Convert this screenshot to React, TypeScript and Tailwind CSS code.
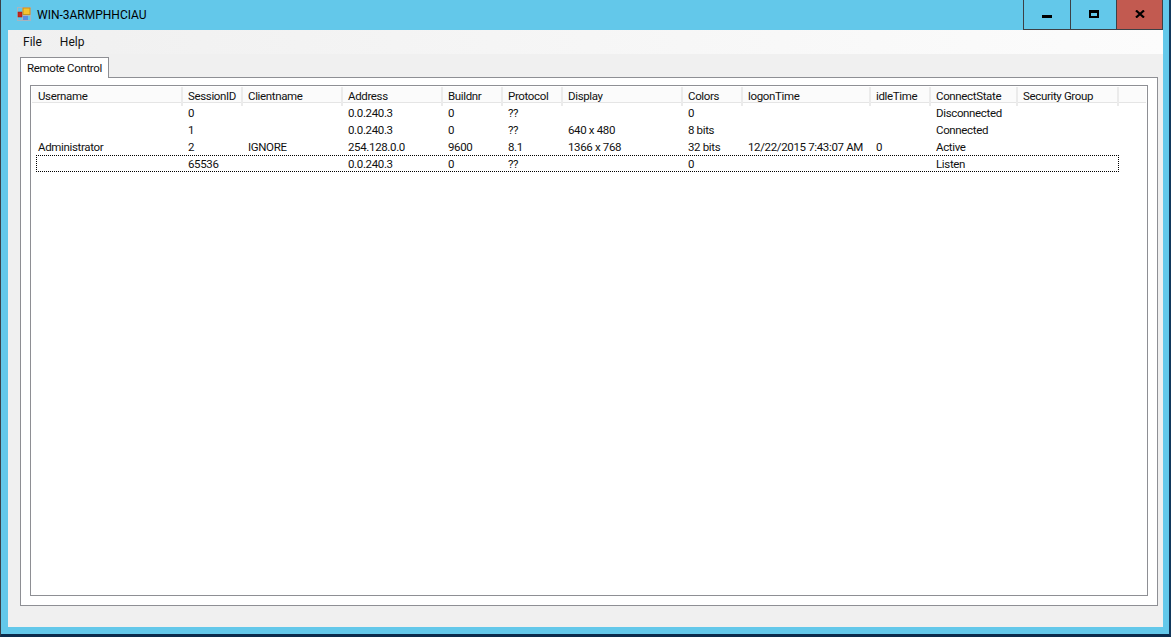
const gridCols =
  "grid grid-cols-[150px_60px_100px_100px_60px_60px_120px_60px_128px_60px_87px_101px]"

const columns = [
  "Username",
  "SessionID",
  "Clientname",
  "Address",
  "Buildnr",
  "Protocol",
  "Display",
  "Colors",
  "logonTime",
  "idleTime",
  "ConnectState",
  "Security Group",
]

const rows = [
  ["", "0", "", "0.0.240.3", "0", "??", "", "0", "", "", "Disconnected", ""],
  ["", "1", "", "0.0.240.3", "0", "??", "640 x 480", "8 bits", "", "", "Connected", ""],
  ["Administrator", "2", "IGNORE", "254.128.0.0", "9600", "8.1", "1366 x 768", "32 bits", "12/22/2015 7:43:07 AM", "0", "Active", ""],
  ["", "65536", "", "0.0.240.3", "0", "??", "", "0", "", "", "Listen", ""],
]

function AppIcon() {
  return (
    <svg width="14" height="14" viewBox="0 0 14 14" className="mb-[2px] shrink-0">
      <rect x="0.5" y="0.5" width="13" height="13" fill="none" stroke="#a9b4bd" />
      <line x1="5.5" y1="0" x2="5.5" y2="14" stroke="#a9b4bd" />
      <line x1="0" y1="8.5" x2="14" y2="8.5" stroke="#a9b4bd" />
      <rect x="1" y="5" width="4" height="5" fill="#c8281e" stroke="#8c1a14" strokeWidth="0.5" />
      <rect x="6" y="1" width="7" height="6.5" fill="#f4c430" stroke="#c08a10" strokeWidth="0.8" />
      <rect x="6" y="9" width="5" height="4" fill="#5a8fe0" />
    </svg>
  )
}

function WindowButtons() {
  return (
    <div className="flex h-[30px] w-[140px] border-x border-b border-[#3c4046]">
      <div className="relative h-full w-[47px] border-r border-[#3c4046]">
        <div className="absolute left-[18px] top-[15px] h-[3px] w-[10px] bg-black" />
      </div>
      <div className="relative h-full w-[46px] border-r border-[#3c4046]">
        <div className="absolute left-[18px] top-[10px] h-[8px] w-[10px] border-2 border-black border-t-[3px]" />
      </div>
      <div className="flex h-full flex-1 items-start justify-center bg-[#c25a50] pt-[10px]">
        <svg width="10" height="8" viewBox="0 0 10 8">
          <path d="M1 0.5 L9 7.5 M9 0.5 L1 7.5" stroke="#000" strokeWidth="2.2" fill="none" />
        </svg>
      </div>
    </div>
  )
}

export default function App() {
  return (
    <div className="flex h-[637px] w-[1171px] flex-col overflow-hidden border-b-[3px] border-l border-r-[2px] border-b-[#0b2b4c] border-l-[#3a4048] border-r-[#12385c] bg-[#63c8ea] font-['Roboto',sans-serif] text-[12px] leading-[16px] text-[#111]">
      {/* title bar */}
      <div className="flex h-[30px] shrink-0 items-center">
        <div className="ml-[16px] flex items-center gap-[6px]">
          <AppIcon />
          <span className="text-black">WIN-3ARMPHHCIAU</span>
        </div>
        <div className="ml-auto mr-[6px]">
          <WindowButtons />
        </div>
      </div>

      {/* client area */}
      <div className="ml-[7px] mr-[6px] flex h-[597px] flex-col bg-[#f0f0f0]">
        {/* menu */}
        <div className="flex h-[24px] shrink-0 items-center gap-[18px] bg-gradient-to-r from-[#f0f0f0] to-[#fcfcfc] pl-[15px] text-[#111]">
          <span>File</span>
          <span>Help</span>
        </div>

        {/* tabs */}
        <div className="flex min-h-0 flex-1 flex-col pb-[21px] pl-[12px] pr-[5px] pt-[3px] text-[11.5px] tracking-[-0.35px]">
          <div className="relative z-10 -mb-px flex h-[21px] w-[89px] items-center justify-center border border-b-0 border-[#8e8f94] bg-white">
            Remote Control
          </div>
          <div className="min-h-0 flex-1 border border-[#8e8f94] bg-white px-[9px] pb-[9px] pt-[7px]">
            {/* list view */}
            <div className="h-full border border-[#8e8f94] bg-white pl-px pr-px pt-px">
              <div className={`${gridCols} h-[16px] border-b border-[#e5e5e5] bg-[#fbfbfb] pl-px`}>
                {columns.map((c) => (
                  <div key={c} className="border-r-2 border-[#ebebeb] pl-[5px] leading-[19px]">
                    {c}
                  </div>
                ))}
              </div>
              <div className="ml-[4px] mt-px">
                {rows.map((row, i) => (
                  <div
                    key={i}
                    className={`grid h-[17px] w-[1083px] grid-cols-[150px_60px_100px_100px_60px_60px_120px_60px_128px_60px_87px_98px] border border-dotted ${
                      i === 3 ? "border-black" : "border-transparent"
                    }`}
                  >
                    {row.map((cell, j) => (
                      <div key={j} className="whitespace-nowrap pl-[1px] leading-[17px]">
                        {cell}
                      </div>
                    ))}
                  </div>
                ))}
              </div>
            </div>
          </div>
        </div>
      </div>
    </div>
  )
}
